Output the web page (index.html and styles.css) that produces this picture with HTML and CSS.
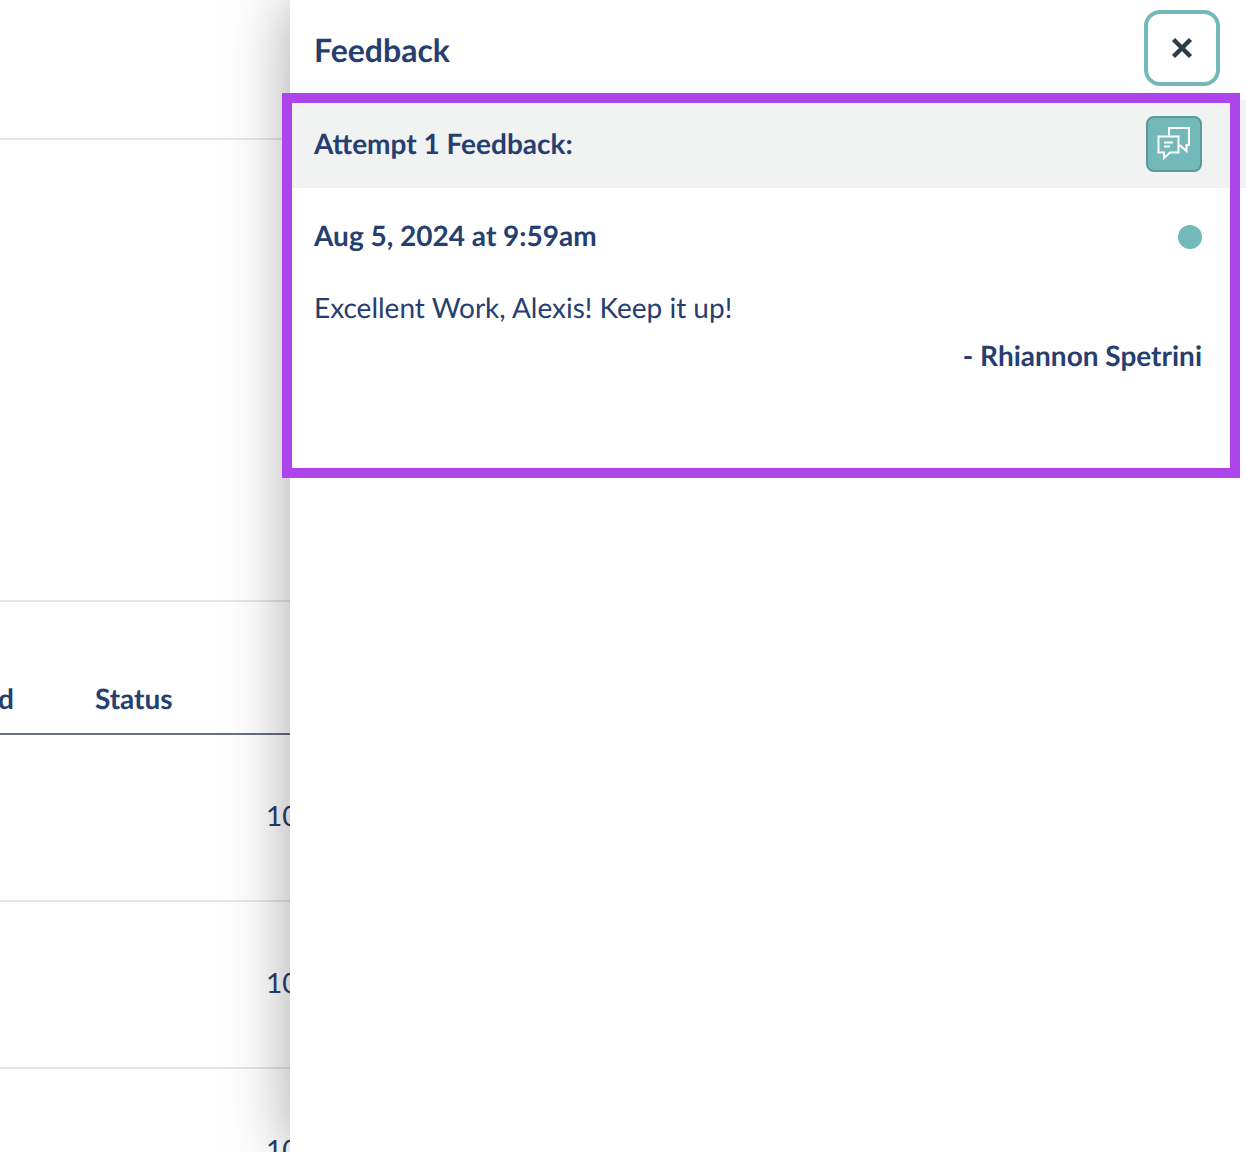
FILE: index.html
```html
<!DOCTYPE html>
<html lang="en">
<head>
<meta charset="utf-8">
<title>Feedback</title>
<link rel="stylesheet" href="styles.css">
</head>
<body>
<div class="page">
  <main class="behind">
    <div class="band band-top"></div>
    <div class="band band-mid"></div>
    <div class="table-head">
      <span class="th-cut">d</span>
      <span class="th-status">Status</span>
    </div>
    <div class="row">10</div>
    <div class="row">10</div>
    <div class="row">10</div>
  </main>
  <aside class="panel">
    <header class="panel-head">
      <h1 class="panel-title">Feedback</h1>
      <button class="close" type="button" aria-label="Close">
        <svg class="close-icon" viewBox="0 0 22 22" width="22" height="22"><path d="M2.500 2.500 19.500 19.500M19.500 2.500 2.500 19.500"/></svg>
      </button>
    </header>
    <section class="attempt">
      <h2 class="attempt-title">Attempt 1 Feedback:</h2>
      <span class="attempt-icon">
        <svg viewBox="0 0 56 56" width="56" height="56"><path d="M23 19.500V12H43V29H40.500V35L33.500 29"/><path d="M12.500 20.500H32.500V36.500H24L18 42V36.500H12.500Z"/><path d="M18 26.500H27M18 30.500H24"/></svg>
      </span>
    </section>
    <section class="comment">
      <div class="comment-meta">
        <span class="comment-date">Aug 5, 2024 at 9:59am</span>
        <span class="dot"></span>
      </div>
      <p class="comment-body">Excellent Work, Alexis! Keep it up!</p>
      <p class="comment-author">- Rhiannon Spetrini</p>
    </section>
    <div class="highlight"></div>
  </aside>
</div>
</body>
</html>
```
FILE: styles.css
```css
* { box-sizing: border-box; }
html, body { margin: 0; height: 100%; }
body {
  font-family: Lato, "Noto Sans", sans-serif;
  color: #263e70;
  background: #fff;
  overflow: hidden;
  text-rendering: geometricPrecision;
}
.page {
  display: flex;
  height: 1152px;
  width: 1246px;
  overflow: hidden;
}
.behind {
  width: 290px;
  flex: none;
  overflow: hidden;
}
.band { border-bottom: 2px solid #e3e5e6; }
.band-top { height: 140px; }
.band-mid { height: 462px; }
.table-head {
  height: 133px;
  border-bottom: 2px solid #68717f;
  display: flex;
  align-items: center;
  padding-top: 60px;
  margin-left: -2px;
  font-size: 28px;
  font-weight: 700;
  white-space: nowrap;
}
.th-status { margin-left: 81px; }
.row {
  height: 167px;
  border-bottom: 2px solid #e3e5e6;
  padding-top: 62px;
  padding-left: 266px;
  font-size: 28px;
  line-height: 36px;
  white-space: nowrap;
}
.panel {
  position: relative;
  flex: 1;
  background: #fff;
  box-shadow: 0 0 60px rgba(0, 0, 0, 0.35);
}
.panel-head {
  height: 100px;
  padding: 10px 26px 0 24px;
  display: flex;
  justify-content: space-between;
  align-items: flex-start;
}
.panel-title {
  margin: 19px 0 0;
  font-size: 32px;
  line-height: 42px;
  font-weight: 700;
}
.close {
  width: 76px;
  height: 76px;
  padding: 0;
  background: #fff;
  border: 4px solid #74b9b9;
  border-radius: 16px;
  display: flex;
  align-items: center;
  justify-content: center;
}
.close-icon path {
  fill: none;
  stroke: #2d3b45;
  stroke-width: 4.500;
}
.attempt {
  height: 88px;
  background: #f1f3f3;
  padding: 16px 44px 16px 24px;
  display: flex;
  align-items: center;
  justify-content: space-between;
}
.attempt-title {
  margin: 0 0 2px;
  font-size: 28px;
  font-weight: 700;
}
.attempt-icon {
  width: 56px;
  height: 56px;
  flex: none;
  background: #74b9b9;
  border: 2px solid #5a9a9a;
  border-radius: 8px;
  overflow: hidden;
}
.attempt-icon svg {
  display: block;
  margin: -2px;
  fill: none;
  stroke: #fff;
  stroke-width: 2;
}
.comment { padding: 28px 44px 0 24px; }
.comment-meta {
  display: flex;
  align-items: center;
  justify-content: space-between;
  height: 40px;
}
.comment-date {
  margin-bottom: 2px;
  font-size: 28px;
  font-weight: 700;
}
.dot {
  width: 24px;
  height: 24px;
  margin-top: 2px;
  border-radius: 50%;
  background: #74b9b9;
}
.comment-body {
  margin: 31px 0 0;
  font-size: 28px;
  line-height: 40px;
}
.comment-author {
  margin: 8px 0 0;
  font-size: 28px;
  line-height: 40px;
  font-weight: 700;
  text-align: right;
}
.highlight {
  position: absolute;
  left: -8px;
  top: 93px;
  width: 958px;
  height: 385px;
  border: 10px solid #ae45ea;
  pointer-events: none;
}
```
